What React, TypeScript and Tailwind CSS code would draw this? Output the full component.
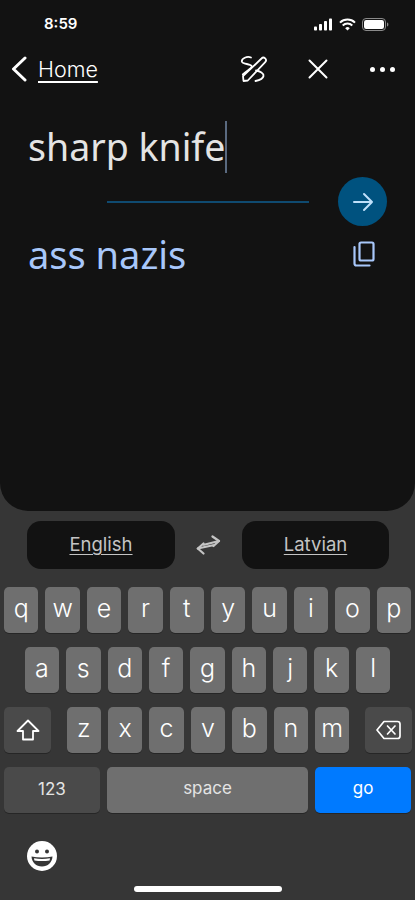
import React from "react";

const rowOne = ["q", "w", "e", "r", "t", "y", "u", "i", "o", "p"];
const rowTwo = ["a", "s", "d", "f", "g", "h", "j", "k", "l"];
const rowThree = ["z", "x", "c", "v", "b", "n", "m"];

function Key({ label }: { label: string }) {
  return (
    <div className="w-[34.4px] h-[46px] shrink-0 rounded-[5px] bg-[#6f6f6f] shadow-[0_1px_0_#262626] flex items-center justify-center pb-[2px] text-[25px] font-light text-white">
      {label}
    </div>
  );
}

function StatusIcons() {
  return (
    <div className="flex items-center gap-[6px]">
      <svg width="19" height="13" viewBox="0 0 19 13" fill="#fff">
        <rect x="0" y="8.5" width="3" height="4" rx="0.8" />
        <rect x="5" y="6" width="3" height="6.5" rx="0.8" />
        <rect x="10" y="3" width="3" height="9.5" rx="0.8" />
        <rect x="15" y="0.5" width="3" height="12" rx="0.8" />
      </svg>
      <svg width="17" height="13" viewBox="0 0 17 13" fill="none" stroke="#fff" strokeWidth="2">
        <path d="M1 4.6a10.8 10.8 0 0 1 15 0" />
        <path d="M3.7 7.4a7 7 0 0 1 9.6 0" />
        <path d="M8.5 12.6 6.2 10.2a3.3 3.3 0 0 1 4.6 0z" fill="#fff" stroke="none" />
      </svg>
      <svg width="27" height="13" viewBox="0 0 27 13" fill="none">
        <rect x="0.5" y="0.5" width="23" height="12" rx="3.5" stroke="#8a8a8a" />
        <rect x="2" y="2" width="20" height="9" rx="2.2" fill="#fff" />
        <path d="M25 4.5c.9.3 1.4 1.1 1.4 2s-.5 1.7-1.4 2z" fill="#8a8a8a" />
      </svg>
    </div>
  );
}

function HandwriteIcon() {
  return (
    <svg width="28" height="28" viewBox="0 0 28 28" fill="none" stroke="#fff" strokeWidth="1.8" strokeLinecap="round" strokeLinejoin="round">
      <path d="M3.500 26 3 21.200 21.500 3.500a2.500 2.500 0 0 1 3.700 3.600L7.800 25.500z" />
      <path d="M11 2.500C7 .8 1.500 3.500 1.800 6.500c.3 3 9.700 2 10 5 .2 1.800-5 4-9 8" />
      <path d="M16 15.500c4 .5 8 2.800 7.500 5.500-.4 2.500-3.500 4-8 5" />
    </svg>
  );
}

function CopyIcon() {
  return (
    <svg width="22" height="26" viewBox="0 0 22 26" fill="none" stroke="#a8c7fa" strokeWidth="2.2" strokeLinejoin="round" strokeLinecap="round">
      <rect x="6.500" y="1.500" width="14" height="18" rx="1.500" />
      <path d="M1.500 6v16.500a2 2 0 0 0 2 2h13" />
    </svg>
  );
}

function SwapIcon() {
  return (
    <svg width="25" height="20" viewBox="0 0 25 20" fill="none" stroke="#c4c4c4" strokeWidth="2.2" strokeLinecap="round" strokeLinejoin="round">
      <path d="M8 9.800 23 6" />
      <path d="M16.500 1.500 23 6l-5.500 5" />
      <path d="M17 10.200 1.800 13.500" />
      <path d="M7.500 8.500 1.800 13.500 7.500 18.500" />
    </svg>
  );
}

function ShiftIcon() {
  return (
    <svg width="24" height="22" viewBox="0 0 24 22" fill="none" stroke="#fff" strokeWidth="1.8" strokeLinejoin="round">
      <path d="M12 1.500 1.500 12H7v8.500h10V12h5.500z" />
    </svg>
  );
}

function DeleteIcon() {
  return (
    <svg width="25" height="20" viewBox="0 0 25 20" fill="none" stroke="#fff" strokeWidth="1.7" strokeLinejoin="round" strokeLinecap="round">
      <path d="M8 1.500h13.500a2.500 2.500 0 0 1 2.500 2.500v12a2.500 2.500 0 0 1-2.500 2.500H8L1 10z" />
      <path d="m11.500 6 7.500 8M19 6l-7.500 8" />
    </svg>
  );
}

function EmojiIcon() {
  return (
    <svg width="30" height="30" viewBox="0 0 30 30">
      <circle cx="15" cy="15" r="15" fill="#fff" />
      <circle cx="10" cy="10.500" r="2" fill="#363636" />
      <circle cx="20" cy="10.500" r="2" fill="#363636" />
      <path d="M4.500 15.500c6.500 1.300 14.500 1.300 21 0-.3 6-4.700 10-10.500 10s-10.200-4-10.500-10z" fill="#363636" />
      <path d="M7 17.300c5 .8 11 .8 16 0l-.4 2.200c-5 .7-10.200.7-15.200 0z" fill="#fff" />
    </svg>
  );
}

export default function App() {
  return (
    <div className="w-[415px] h-[900px] overflow-hidden bg-[#363636] font-['Inter',sans-serif]">
      {/* translate panel */}
      <div className="h-[511px] bg-[#121212] rounded-b-[28px] flex flex-col">
        <div className="h-[48px] pt-[1px] flex items-center justify-between pl-[44px] pr-[26px]">
          <span className="text-[15px] font-semibold text-white">8:59</span>
          <StatusIcons />
        </div>
        <div className="h-[42px] flex items-center">
          <svg className="ml-[11px]" width="16" height="26" viewBox="0 0 16 26" fill="none" stroke="#fff" strokeWidth="3" strokeLinecap="round" strokeLinejoin="round">
            <path d="M14 2 2.500 13 14 24" />
          </svg>
          <span className="ml-[11px] text-[21.5px] font-light text-white underline underline-offset-4 decoration-[1.5px]">Home</span>
          <div className="ml-[142px] flex">
            <HandwriteIcon />
          </div>
          <svg className="ml-[40px]" width="20" height="20" viewBox="0 0 20 20" fill="none" stroke="#fff" strokeWidth="2" strokeLinecap="round">
            <path d="m1.500 1.500 17 17M18.500 1.500l-17 17" />
          </svg>
          <div className="ml-[42px] flex gap-[5px]">
            <div className="w-[5px] h-[5px] rounded-full bg-white" />
            <div className="w-[5px] h-[5px] rounded-full bg-white" />
            <div className="w-[5px] h-[5px] rounded-full bg-white" />
          </div>
        </div>
        <div className="mt-[31px] h-[52px] pl-[28px] flex items-center">
          <span className="text-[37.5px] font-normal text-[#e4e4e4] font-['Noto_Sans',sans-serif]">sharp knife</span>
          <div className="w-[2px] h-[52px] bg-[#5a6a80]" />
        </div>
        <div className="mt-[4px] flex items-center">
          <div className="ml-[107px] w-[202px] h-[2px] bg-[#0f4a70]" />
          <div className="ml-[29px] w-[49px] h-[49px] rounded-full bg-[#00527f] flex items-center justify-center">
            <svg width="22" height="20" viewBox="0 0 22 20" fill="none" stroke="#bfe0fa" strokeWidth="2" strokeLinecap="round" strokeLinejoin="round">
              <path d="M2 10h18M12 2l8 8-8 8" />
            </svg>
          </div>
        </div>
        <div className="mt-[6px] h-[44px] pl-[28px] pr-[40px] flex items-center justify-between">
          <span className="text-[38px] font-normal text-[#a8c7fa] font-['Noto_Sans',sans-serif]">ass nazis</span>
          <CopyIcon />
        </div>
      </div>

      {/* language picker */}
      <div className="mt-[10px] h-[48px] pl-[27px] flex items-center">
        <div className="w-[148px] h-[48px] rounded-[14px] bg-[#121212] flex items-center justify-center text-[18.5px] text-[#c4c4c4] underline underline-offset-3">English</div>
        <div className="w-[67px] flex justify-center">
          <SwapIcon />
        </div>
        <div className="w-[147px] h-[48px] rounded-[14px] bg-[#121212] flex items-center justify-center text-[18.5px] text-[#c4c4c4] underline underline-offset-3">Latvian</div>
      </div>

      {/* keyboard */}
      <div className="mt-[18px] flex flex-col gap-[14px]">
        <div className="flex justify-center gap-[7px]">
          {rowOne.map((k) => (
            <Key key={k} label={k} />
          ))}
        </div>
        <div className="flex justify-center gap-[7px]">
          {rowTwo.map((k) => (
            <Key key={k} label={k} />
          ))}
        </div>
        <div className="pl-[4px] pr-[3px] flex justify-between">
          <div className="w-[47px] h-[46px] rounded-[5px] bg-[#4a4a4a] shadow-[0_1px_0_#262626] flex items-center justify-center">
            <ShiftIcon />
          </div>
          <div className="flex gap-[7px]">
            {rowThree.map((k) => (
              <Key key={k} label={k} />
            ))}
          </div>
          <div className="w-[47px] h-[46px] rounded-[5px] bg-[#4a4a4a] shadow-[0_1px_0_#262626] flex items-center justify-center">
            <DeleteIcon />
          </div>
        </div>
        <div className="px-[4px] flex gap-[7px] text-[17px]">
          <div className="w-[96px] h-[46px] rounded-[5px] bg-[#4a4a4a] shadow-[0_1px_0_#262626] flex items-center justify-center text-[#e4e4e4]">123</div>
          <div className="w-[202px] h-[46px] rounded-[5px] bg-[#6f6f6f] shadow-[0_1px_0_#262626] flex items-center justify-center pb-[3px] text-[#e4e4e4]">space</div>
          <div className="w-[96px] h-[46px] rounded-[5px] bg-[#007aff] shadow-[0_1px_0_#262626] flex items-center justify-center pb-[3px] text-white">go</div>
        </div>
      </div>
      <div className="mt-[28px] pl-[27px]">
        <EmojiIcon />
      </div>
      <div className="mt-[15px] mx-auto w-[148px] h-[6px] rounded-full bg-white" />
    </div>
  );
}
